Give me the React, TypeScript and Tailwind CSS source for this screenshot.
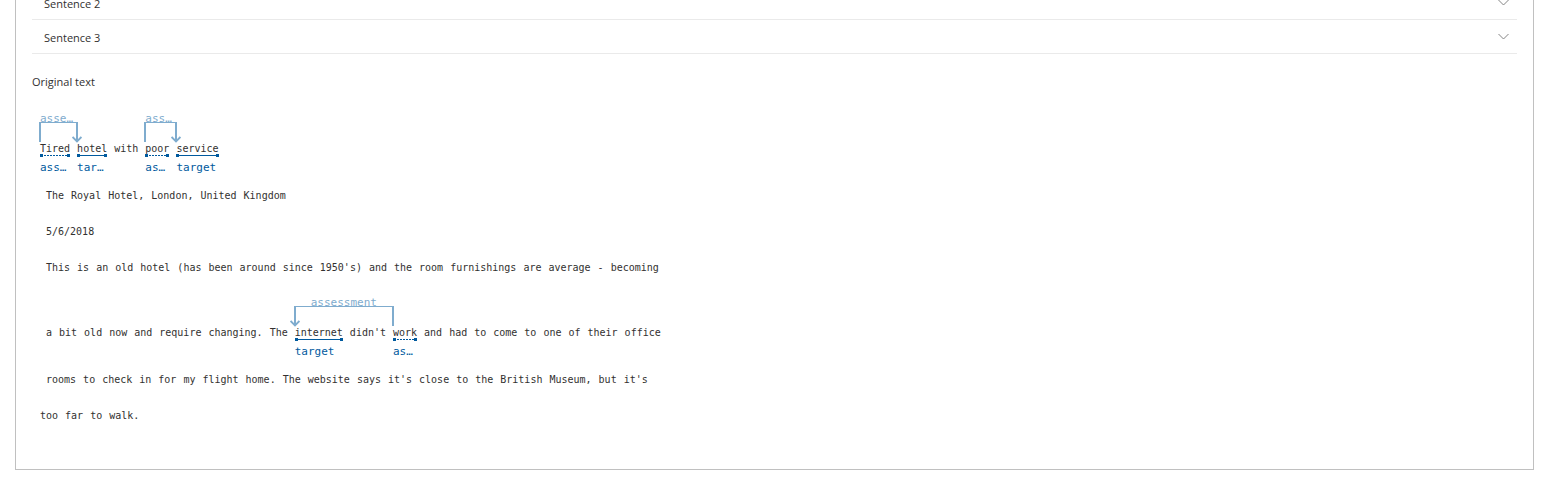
import React from "react";

const GAP = 7;

type Relation = { label: string; chars: number; gaps: number; arrow: "start" | "end"; truncated?: boolean };
type Token = { text: string; entity?: { label: string; dotted?: boolean }; relation?: Relation };
type Line = { tokens: Token[]; indent?: boolean };

const words = (text: string): Token[] => text.split(" ").map((t) => ({ text: t }));

const lines: Line[] = [
  {
    tokens: [
      {
        text: "Tired",
        entity: { label: "ass…", dotted: true },
        relation: { label: "asse…", chars: 5, gaps: 1, arrow: "end", truncated: true },
      },
      { text: "hotel", entity: { label: "tar…" } },
      { text: "with" },
      {
        text: "poor",
        entity: { label: "as…", dotted: true },
        relation: { label: "ass…", chars: 4, gaps: 1, arrow: "end", truncated: true },
      },
      { text: "service", entity: { label: "target" } },
    ],
  },
  { indent: true, tokens: words("The Royal Hotel, London, United Kingdom") },
  { indent: true, tokens: words("5/6/2018") },
  {
    indent: true,
    tokens: words(
      "This is an old hotel (has been around since 1950's) and the room furnishings are average - becoming"
    ),
  },
  {
    indent: true,
    tokens: [
      ...words("a bit old now and require changing. The"),
      {
        text: "internet",
        entity: { label: "target" },
        relation: { label: "assessment", chars: 14, gaps: 2, arrow: "start" },
      },
      { text: "didn't" },
      { text: "work", entity: { label: "as…", dotted: true } },
      ...words("and had to come to one of their office"),
    ],
  },
  {
    indent: true,
    tokens: words(
      "rooms to check in for my flight home. The website says it's close to the British Museum, but it's"
    ),
  },
  { tokens: words("too far to walk.") },
];

function Chevron() {
  return (
    <svg className="h-3 w-3 shrink-0" viewBox="0 0 12 12" fill="none" stroke="#858585" aria-hidden="true">
      <path d="M1.5 3 L6.5 8 L11.5 3" />
    </svg>
  );
}

function RelationBracket({ relation }: { relation: Relation }) {
  return (
    <span
      className="absolute -top-4 left-0 h-7 text-[#7facce]"
      style={{ width: `calc(${relation.chars}ch + ${relation.gaps * GAP}px)` }}
    >
      <span className="absolute inset-y-0 -left-px -right-px">
        <span className="absolute top-2 left-0 right-0 h-5 border-x-2 border-t border-[#7facce]" />
        <svg
          className={`absolute top-[22px] h-[7px] w-[10px] ${relation.arrow === "end" ? "-right-1" : "-left-1"}`}
          viewBox="0 0 10 7"
          fill="none"
          stroke="currentColor"
          strokeWidth="1.8"
          aria-hidden="true"
        >
          <path d="M0.6 1 L5 5.4 L9.4 1" />
        </svg>
      </span>
      <span
        className={`absolute inset-x-0 -top-[3px] text-[11px] leading-4 ${relation.truncated ? "text-left" : "text-center"}`}
      >
        {relation.label}
      </span>
    </span>
  );
}

function TokenView({ token }: { token: Token }) {
  return (
    <span className="relative block h-9">
      {token.text}
      {token.relation && <RelationBracket relation={token.relation} />}
      {token.entity && (
        <>
          <span className="absolute inset-x-0 top-6 flex h-[3px] items-center justify-between">
            <span className="h-[3px] w-[3px] bg-[#005a9e]" />
            <span
              className={
                token.entity.dotted
                  ? "h-px flex-1 bg-[repeating-linear-gradient(90deg,transparent_0_1px,#005a9e_1px_3px)]"
                  : "h-px flex-1 bg-[#005a9e]"
              }
            />
            <span className="h-[3px] w-[3px] bg-[#005a9e]" />
          </span>
          <span className="absolute top-7 left-0 text-[11px] leading-5 text-[#005a9e]">{token.entity.label}</span>
        </>
      )}
    </span>
  );
}

export default function App() {
  return (
    <main className="overflow-hidden bg-white pr-2 pb-3 pl-[15px] font-['Open_Sans','Noto_Sans',sans-serif] text-[#323130]">
      <section className="border-x border-b border-[#c0c0c0] px-4 pb-9">
        <div className="-mt-[14px]">
          {["Sentence 2", "Sentence 3"].map((name) => (
            <button
              key={name}
              type="button"
              className="flex h-[34px] w-full items-center justify-between border-b border-[#eaeaea] pr-2 pl-3 text-left text-[11px]"
            >
              <span className="pt-1">{name}</span>
              <Chevron />
            </button>
          ))}
        </div>
        <h2 className="pt-[18px] pb-[9px] text-[11px] leading-5">Original text</h2>
        <div className="pl-2 font-['DejaVu_Sans_Mono','Liberation_Mono',monospace] text-[10px] leading-[38px]">
          {lines.map((line, i) => (
            <div
              key={i}
              className={`flex gap-[7px] ${line.indent ? "pl-1.5" : ""} ${
                line.tokens.some((t) => t.entity) ? "pt-[29px] pb-[11px]" : ""
              }`}
            >
              {line.tokens.map((token, j) => (
                <TokenView key={j} token={token} />
              ))}
            </div>
          ))}
        </div>
      </section>
    </main>
  );
}
